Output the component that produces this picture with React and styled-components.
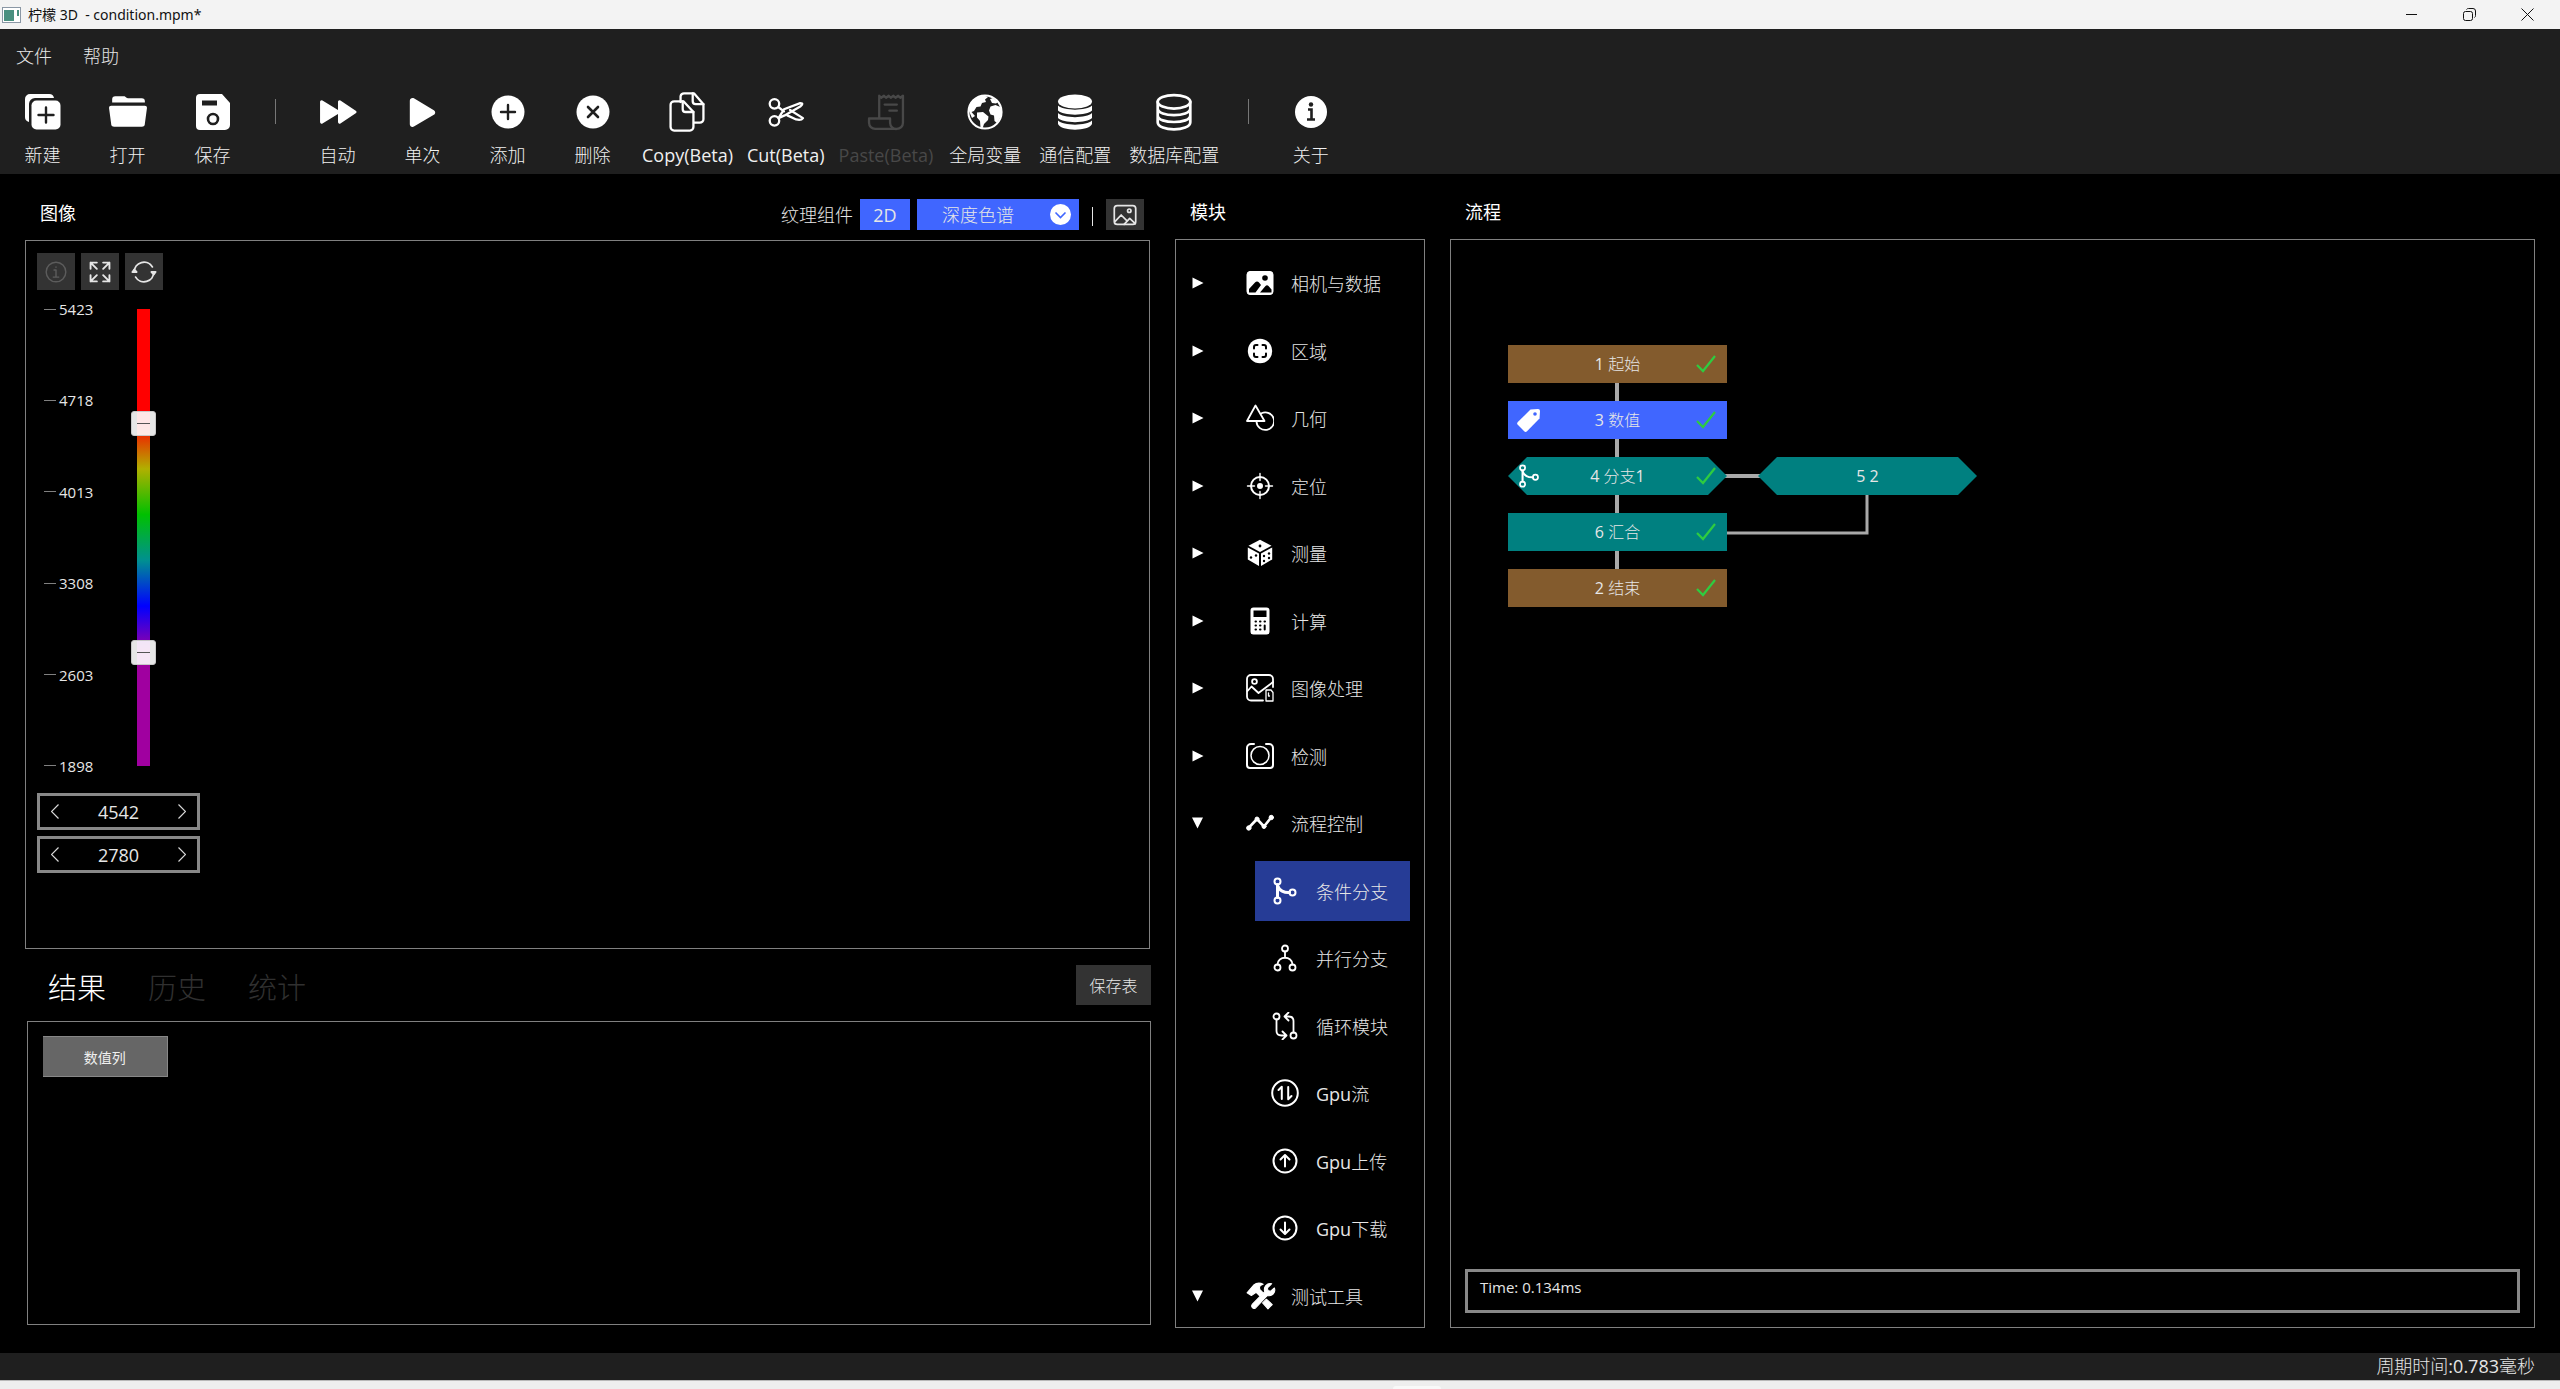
import React, { useState } from "react";
import styled, { createGlobalStyle } from "styled-components";
import { FaPlay } from "react-icons/fa";

// css
const GlobalStyle = createGlobalStyle`
  * {
    box-sizing: border-box;
  }
  body {
    margin: 0;
    background: #000000;
    color: #e6e6e6;
    font-family: "Open Sans", "Noto Sans CJK SC Light", "Noto Sans CJK SC", sans-serif;
    font-size: 18px;
    line-height: 24px;
  }
  button, input, select {
    font-family: inherit;
    font-weight: inherit;
    color: inherit;
    margin: 0;
    padding: 0;
    border: none;
    border-radius: 0;
    background: none;
  }
  svg {
    display: block;
    flex: none;
  }
`;
const Window = styled.div`
  display: flex;
  flex-direction: column;
  min-height: 100vh;
`;
const TitleBar = styled.header`
  display: flex;
  align-items: center;
  height: 29px;
  padding: 0 4px 0 2px;
  background: #f3f3f3;
  color: #111111;
  font-family: "Noto Sans", "Noto Sans CJK SC", sans-serif;
  font-size: 14px;
`;
const TitleText = styled.span`
  flex: 1;
  margin-left: 7px;
  white-space: pre;
`;
const WindowButton = styled.button`
  display: flex;
  align-items: center;
  justify-content: center;
  width: 58px;
  height: 29px;
`;
const Header = styled.div`
  display: flex;
  flex-direction: column;
  height: 145px;
  background: #1f1f1f;
`;
const Menu = styled.nav`
  display: flex;
  gap: 31px;
  padding: 15px 16px 0;
`;
const MenuItem = styled.button`
  font-size: 18px;
  line-height: 24px;
`;
const Toolbar = styled.div`
  display: flex;
  padding-top: 20px;
`;
const Tool = styled.button`
  display: flex;
  flex-direction: column;
  align-items: center;
  gap: 7px;
  min-width: 85px;
  padding: 0 ${(props) => (props.$beta ? "7px" : "9px")};
  font-size: 18px;
  line-height: 24px;
  color: ${(props) => (props.disabled ? "#484848" : "#f0f0f0")};
`;
const ToolIcon = styled.span`
  display: flex;
  align-items: center;
  justify-content: center;
  height: 48px;
  color: ${(props) => (props.$off ? "#484848" : "#ffffff")};
`;
const Divider = styled.div`
  width: 1px;
  height: 25px;
  margin: 11px 19px 0 20px;
  background: #777777;
`;
const Main = styled.main`
  display: grid;
  grid-template-columns: 1126fr 251px 1085fr;
  gap: 24px;
  flex: 1;
  padding: 0 25px 25px;
`;
const Column = styled.div`
  display: flex;
  flex-direction: column;
`;
const ModuleColumn = styled(Column)`
  padding-right: 1px;
`;
const ColumnHead = styled.div`
  display: flex;
  align-items: center;
  height: 65px;
  padding: 10px 0 0 15px;
`;
const ImageHead = styled(ColumnHead)`
  height: 66px;
  padding: 15px 6px 0 15px;
`;
const ColumnTitle = styled.h2`
  flex: 1;
  margin: 0;
  font-family: "Open Sans", "Noto Sans CJK SC", sans-serif;
  font-size: 18px;
  font-weight: 400;
  line-height: 24px;
  color: #ffffff;

  ${ImageHead} & {
    padding-bottom: 4px;
  }
`;
const Panel = styled.section`
  display: flex;
  flex-direction: column;
  flex: 1;
  border: 1px solid #808080;
`;
const ImagePart = styled.div`
  display: flex;
  flex-direction: column;
  flex: 775;
  padding-right: 1px;
`;
const ResultPart = styled.div`
  display: flex;
  flex-direction: column;
  flex: 376;
  padding-left: 2px;
  margin-bottom: 3px;
`;
const BlueButton = styled.button`
  width: 50px;
  height: 31px;
  margin: 0 7px;
  background: #4066ff;
  font-size: 18px;
`;
const SelectBox = styled.label`
  display: grid;
  align-items: center;
  width: 162px;
  height: 31px;
  background: #4066ff;

  select, svg {
    grid-area: 1 / 1;
  }
  select {
    height: 31px;
    padding-left: 25px;
    appearance: none;
    outline: none;
    font-size: 18px;
  }
  svg {
    justify-self: end;
    margin-right: 8px;
    pointer-events: none;
  }
`;
const Bar = styled.span`
  width: 1px;
  height: 19px;
  margin: 4px 13px 0;
  background: #e6e6e6;
`;
const DarkButton = styled.button`
  display: flex;
  align-items: center;
  justify-content: center;
  width: ${(props) => props.width || "38px"};
  height: ${(props) => props.height || "37px"};
  background: #333333;
  color: ${(props) => (props.disabled ? "#5c5c5c" : "#e6e6e6")};
  font-size: 16px;
`;
const ViewTools = styled.div`
  display: flex;
  gap: 6px;
  padding: 12px 11px 0;
`;
const RangeArea = styled.div`
  display: flex;
  gap: 40px;
  padding: 9px 0 0 18px;
`;
const Scale = styled.div`
  display: flex;
  flex-direction: column;
  justify-content: space-between;
  height: 477px;
  width: 53px;
`;
const Tick = styled.span`
  display: flex;
  align-items: center;
  gap: 3px;
  font-size: 15px;
  line-height: 20px;

  &::before {
    content: "";
    width: 12px;
    height: 1px;
    background: #808080;
  }
`;
const Track = styled.div`
  position: relative;
  width: 13px;
  height: 457px;
  margin-top: 10px;
  background: linear-gradient(
    #ff0000 25%, #b0b000 35%, #00c000 45%, #009090 55%, #0000ff 65%, #a000a0 75%
  );
`;
// the range runs half a thumb past the track on both ends
const TrackRange = styled.input`
  position: absolute;
  top: -12px;
  left: -6px;
  width: 25px;
  height: 482px;
  appearance: none;
  writing-mode: vertical-lr;
  direction: rtl;
  pointer-events: none;

  &::-webkit-slider-thumb {
    appearance: none;
    width: 25px;
    height: 25px;
    border: 1px solid #c8c8c8;
    border-radius: 3px;
    background:
      linear-gradient(#555555, #555555) center / 13px 1px no-repeat,
      rgba(255, 255, 255, 0.9);
    pointer-events: auto;
  }
`;
const Spinners = styled.div`
  display: flex;
  flex-direction: column;
  gap: 6px;
  width: 163px;
  margin: 17px 11px;
`;
const Spinner = styled.div`
  display: flex;
  align-items: center;
  height: 37px;
  border: 3px solid #888888;

  button {
    display: flex;
    justify-content: center;
    width: 30px;
  }
  input {
    flex: 1;
    min-width: 0;
    text-align: center;
    font-size: 18px;
    outline: none;
  }
`;
const Tabs = styled.div`
  display: flex;
  align-items: center;
  gap: 42px;
  height: 72px;
  padding-left: 21px;
`;
const Tab = styled.button`
  padding-top: 6px;
  font-size: 29px;
  line-height: 40px;
  color: ${(props) => (props.$active ? "#ffffff" : "#303030")};
`;
const TabSpace = styled.span`
  flex: 1;
`;
const ResultTable = styled.table`
  align-self: flex-start;
  margin: 14px 15px;
  border-collapse: collapse;

  th {
    width: 124px;
    height: 40px;
    padding: 0;
    background: #666666;
    border: 1px solid #888888;
    border-left: none;
    color: #f0f0f0;
    font-family: "Noto Sans CJK SC", sans-serif;
    font-size: 14px;
    font-weight: 400;
  }
`;
const Tree = styled.ul`
  display: flex;
  flex-direction: column;
  justify-content: space-between;
  flex: 1;
  margin: 0;
  padding: 13px 0 1px;
  list-style: none;
`;
const TreeRow = styled.li`
  display: flex;
  height: 60px;
  padding-left: ${(props) => (props.$child ? "79px" : "16px")};
`;
const TreeButton = styled.button`
  display: flex;
  align-items: center;
  width: ${(props) => (props.$child ? "155px" : "220px")};
  padding-left: ${(props) => (props.$child ? "16px" : "0")};
  background: ${(props) => (props.$selected ? "#263c96" : "none")};
  font-size: 18px;
  white-space: nowrap;
`;
const Arrow = styled.span`
  width: 54px;
`;
const TreeIcon = styled.span`
  display: flex;
  width: 45px;
  color: #ffffff;
`;
const Canvas = styled.div`
  position: relative;
  flex: 1;
  min-height: 400px;
`;
const Node = styled.div`
  position: absolute;
  left: ${(props) => props.$x}px;
  top: ${(props) => props.$y}px;
  display: grid;
  grid-template-columns: 42px 1fr 42px;
  align-items: center;
  width: 219px;
  height: 38px;
  background: ${(props) => props.$bg};
  clip-path: ${(props) =>
    props.$hex ? "polygon(19px 0, 200px 0, 100% 50%, 200px 100%, 19px 100%, 0 50%)" : "none"};
  font-size: 16px;
  text-align: center;
  white-space: nowrap;

  svg {
    justify-self: center;
  }
`;
const NodeIcon = styled.span`
  display: flex;
  justify-content: center;
  color: #ffffff;
`;
const Wires = styled.svg`
  position: absolute;
  left: 0;
  top: 0;
`;
const TimeBox = styled.div`
  height: 44px;
  margin: 0 14px 14px;
  padding: 3px 12px;
  border: 3px solid #888888;
  font-size: 15px;
`;
const StatusBar = styled.footer`
  height: 27px;
  padding-right: 25px;
  background: #1f1f1f;
  line-height: 27px;
  text-align: right;
`;
const Taskbar = styled.div`
  display: flex;
  align-items: flex-end;
  justify-content: center;
  height: 9px;
  border-top: 1px solid #b8b8b8;
  background: #eeeeee;

  &::after {
    content: "";
    width: 48px;
    height: 3px;
    margin-left: 274px;
    border-radius: 3px 3px 0 0;
    background: #f9f9f9;
  }
`;

// icons
const Icon = ({ size = 28, width = 2, children }) => (
  <svg width={size} height={size} viewBox="0 0 28 28" fill="none" stroke="currentColor"
    strokeWidth={width} strokeLinecap="round" strokeLinejoin="round" aria-hidden="true">
    {children}
  </svg>
);
const Solid = ({ size = 36, children }) => (
  <svg width={size} height={size} viewBox="0 0 36 36" fill="currentColor" aria-hidden="true">
    {children}
  </svg>
);
const NewIcon = () => (
  <Solid>
    <path d="M5 0h19a5 5 0 0 1 5 4H10a6 6 0 0 0-6 6v18a5 5 0 0 1-4-5V5a5 5 0 0 1 5-5z" />
    <rect x="6.500" y="6.500" width="29" height="29" rx="5" />
    <path d="M21 13.500v15M13.500 21h15" stroke="#1f1f1f" strokeWidth="2.400" strokeLinecap="round" />
  </Solid>
);
const OpenIcon = () => (
  <Solid size={38}>
    <path d="M3 9V6a3 3 0 0 1 3-3h8c2 0 2 2 5 2h12a3 3 0 0 1 3 3v1z" />
    <path d="M2 12h32a2 2 0 0 1 2 2l-2 15a3 3 0 0 1-3 3H5a3 3 0 0 1-3-3L0 14a2 2 0 0 1 2-2z" />
  </Solid>
);
const SaveIcon = () => (
  <Solid>
    <path d="M4 0h23l8 9v22a5 5 0 0 1-5 5H5a4 4 0 0 1-4-4V4a4 4 0 0 1 4-4z" />
    <path d="M7 6.500h15v5H7z" fill="#1f1f1f" />
    <circle cx="18" cy="25" r="5" fill="none" stroke="#1f1f1f" strokeWidth="2.600" />
  </Solid>
);
const ForwardIcon = () => (
  <Solid size={38}>
    <path d="M1 8.500a1.500 1.500 0 0 1 2.300-1.300L18 16V8.500a1.500 1.500 0 0 1 2.300-1.300l14.500 9.500a1.500 1.500 0 0 1 0 2.600l-14.500 9.500A1.500 1.500 0 0 1 18 27.500V20L3.300 28.800A1.500 1.500 0 0 1 1 27.500z" />
  </Solid>
);
const AddIcon = () => (
  <Solid>
    <circle cx="18" cy="18" r="16.500" />
    <path d="M18 11v14M11 18h14" stroke="#1f1f1f" strokeWidth="2.400" strokeLinecap="round" />
  </Solid>
);
const DeleteIcon = () => (
  <Solid>
    <circle cx="18" cy="18" r="16.500" />
    <path d="M13 13l10 10M23 13L13 23" stroke="#1f1f1f" strokeWidth="2.600" strokeLinecap="round" />
  </Solid>
);
const CopyIcon = () => (
  <Icon size={40} width={1.6}>
    <path d="M9.500 7V3A2.500 2.500 0 0 1 12 1h7l6.500 7.500V19a2.500 2.500 0 0 1-2.500 2.500h-4" />
    <path d="M18 1v5.500A2 2 0 0 0 20 8.500h5.500" />
    <path d="M5 6.500h6.500l7 7.500v10.500A2.500 2.500 0 0 1 16 27H5a2.500 2.500 0 0 1-2.500-2.500V9A2.500 2.500 0 0 1 5 6.500z" />
    <path d="M11 6.500V12a2 2 0 0 0 2 2h5.500" />
  </Icon>
);
const CutIcon = () => (
  <Icon size={38} width={1.7}>
    <circle cx="5.500" cy="8" r="3.500" />
    <circle cx="5.500" cy="20.500" r="3.500" />
    <path d="M8.500 10.500l4 3M8.500 18.500l4-6.500 12-4.500c2 0 2 1 0 2.500L13 16.500z" />
    <path d="M17 12.500l9.500 6c-1 1.500-3 1.500-5 1L15 16.500" />
  </Icon>
);
const PasteIcon = () => (
  <Icon size={38} width={1.7}>
    <path d="M9 18V2l1.500 1.500L12.500 2 14 3.500 16 2l1.500 1.500 2-1.500L21 3.500 23 2l1.500 1.500 2-1.500v20a4.500 4.500 0 0 1-4.500 4.500H6A4.500 4.500 0 0 1 1.500 22v-3.200H17V22a4.500 4.500 0 0 0 5 4.500" />
    <path d="M13 8.500h9M16.500 13h5.500" />
  </Icon>
);
const EarthIcon = () => (
  <Solid>
    <circle cx="18" cy="18" r="16.600" fill="none" stroke="currentColor" strokeWidth="2" />
    <path d="M1.500 16C3 8 9 2 17 1.500l4 1.500-3 2.500 1 2.500-4 1-1.500 3.500-4 .5L7 17l-2.500 1L8 22l-3 2z" />
    <path d="M10 18.500l6-.5 5.500 4.500L21 26l-4 4-1.500 4.500-2-1-.5-6.500-3-3.500z" />
    <path d="M23.500 12.500l5-1.500 6 2.500.5 7-5 8.500-2.500-2-.5-5.500-3.500-1-1.500-4z" />
    <path d="M23 5l3-1 5 4-2 1.500-4-.5z" />
  </Solid>
);
const DiscsIcon = () => (
  <Solid>
    <ellipse cx="18" cy="7.500" rx="17" ry="7" />
    <path d="M1 11.500c5 5.500 29 5.500 34 0v5c-5 5.500-29 5.500-34 0z" />
    <path d="M1 19c5 5.500 29 5.500 34 0v5c-5 5.500-29 5.500-34 0z" />
    <path d="M1 26.500c5 5.500 29 5.500 34 0V30c-3 7.500-31 7.500-34 0z" />
  </Solid>
);
const DatabaseIcon = () => (
  <Icon size={38} width={2}>
    <ellipse cx="14" cy="6.500" rx="12" ry="5" />
    <path d="M2 6.500v15c0 7 24 7 24 0v-15M2 11.500c0 6.500 24 6.500 24 0M2 16.500c0 6.500 24 6.500 24 0" />
  </Icon>
);
const AboutIcon = () => (
  <Solid>
    <circle cx="18" cy="18" r="16" />
    <circle cx="18" cy="10.500" r="2.200" fill="#1f1f1f" />
    <path d="M15 15.500h3.500V25M14 25.500h8" fill="none" stroke="#1f1f1f" strokeWidth="2.600" />
  </Solid>
);
const PictureIcon = () => (
  <Icon size={24} width={2}>
    <rect x="1.500" y="3" width="25" height="22" rx="3.500" />
    <circle cx="19" cy="9" r="2" />
    <path d="M2.500 21.500L9.500 14l6 6M13 25l6.500-7 6.500 6" />
  </Icon>
);
const InfoIcon = () => (
  <Icon size={22} width={1.8}>
    <circle cx="14" cy="14" r="12.500" />
    <path d="M11.500 11.500H14V20M10.500 20.500h7M14 7.500v.5" />
  </Icon>
);
const ExpandIcon = () => (
  <Icon size={22} width={2.4}>
    <path d="M10 2H2v8M2 2l8 8M18 2h8v8M26 2l-8 8M10 26H2v-8M2 26l8-8M18 26h8v-8M26 26l-8-8" />
  </Icon>
);
const RefreshIcon = () => (
  <Icon size={26} width={2}>
    <path d="M3.500 14A10.500 10.500 0 0 1 23 8.500M24.500 14A10.500 10.500 0 0 1 5 19.500" />
    <path d="M1.500 14l2-2.500L6 14zM22 14l2.500 2.500 2-2.500z" fill="currentColor" />
  </Icon>
);
const Chevron = ({ right }) => (
  <svg width="8" height="15" viewBox="0 0 8 15" fill="none" stroke="#d8d8d8" strokeWidth="1.200">
    <path d={right ? "M.5 .5l7 7-7 7" : "M7.500 .5l-7 7 7 7"} />
  </svg>
);
const PhotoIcon = () => (
  <Icon width={1}>
    <rect x="1" y="2.500" width="26" height="23" rx="3" fill="currentColor" />
    <circle cx="19" cy="9" r="2.800" fill="#000000" stroke="none" />
    <path d="M3 23.500v-3.500l6-6.500c1.500-1.500 3-1 4 0l2 2.500L9.500 23.500zM14 23.500l5.500-6.500c1-1 2-1 3 0l3 3.500v3z" fill="#000000" stroke="none" />
  </Icon>
);
const RegionIcon = () => (
  <Icon>
    <circle cx="14" cy="14" r="12.200" fill="currentColor" stroke="none" />
    <path d="M8 11.500V10a2 2 0 0 1 2-2h1.500M16.500 8H18a2 2 0 0 1 2 2v1.500M20 16.500V18a2 2 0 0 1-2 2h-1.500M11.500 20H10a2 2 0 0 1-2-2v-1.500" stroke="#000000" />
  </Icon>
);
const ShapesIcon = () => (
  <Icon width={1.8}>
    <path d="M9.500 1.500L1 17h17.500z" />
    <path d="M15.500 9.200a8.800 8.800 0 1 1-5 8.500" />
  </Icon>
);
const LocateIcon = () => (
  <Icon>
    <circle cx="14" cy="14" r="9" />
    <circle cx="14" cy="14" r="2" fill="currentColor" />
    <path d="M14 1.500v7M14 19.500v7M1.500 14h7M19.500 14h7" strokeWidth="1.400" />
  </Icon>
);
const DiceIcon = () => (
  <Icon width={0}>
    <path d="M14 .8l11.500 6L14 13 2.500 6.800z" fill="currentColor" />
    <path d="M1.800 8.500L13 14.500V27L1.800 20.500zM26.200 8.500L15 14.500V27l11.200-6.500z" fill="currentColor" />
    <g fill="#000000">
      <circle cx="14" cy="7" r="1.400" /><circle cx="5" cy="18.500" r="1.200" />
      <circle cx="10" cy="16.500" r="1.200" /><circle cx="18" cy="17" r="1.200" />
      <circle cx="23" cy="14.500" r="1.200" /><circle cx="18" cy="22" r="1.200" />
      <circle cx="23" cy="19" r="1.200" />
    </g>
  </Icon>
);
const CalculatorIcon = () => (
  <Icon>
    <rect x="6" y="2" width="16" height="24" rx="1.500" strokeWidth="3" />
    <path d="M6 11h16v15H6z" fill="currentColor" />
    <path d="M9.500 14.500h.5M14 14.500h.5M18.500 14.500h.5M9.500 18.500h.5M14 18.500h.5M9.500 22.500h.5M14 22.500h.5M18.700 18.500v4" stroke="#000000" />
  </Icon>
);
const ProcessIcon = () => (
  <Icon width={1.8}>
    <path d="M17 26.500H5A4 4 0 0 1 1 22.500V5a4 4 0 0 1 4-4h18a4 4 0 0 1 4 4v8" />
    <circle cx="8.500" cy="7.500" r="2.400" />
    <path d="M1.500 17l4-4.500 7 6.500L27 8" />
    <path d="M20 16h5l2 2.500V27h-7zM22.500 19v3h1" strokeWidth="1.300" />
  </Icon>
);
const DetectIcon = () => (
  <Icon>
    <path d="M8 2H5a4 4 0 0 0-4 4v17a3 3 0 0 0 3 3h20a3 3 0 0 0 3-3V6a4 4 0 0 0-4-4h-3" />
    <circle cx="14" cy="13.500" r="9" strokeWidth="1.500" />
  </Icon>
);
const TrendIcon = () => (
  <Icon width={2.6}>
    <path d="M2.500 19L11 10l7 7.500L25.500 8" />
    <g fill="currentColor" strokeWidth="1">
      <circle cx="2.800" cy="19" r="2.200" /><circle cx="11" cy="10" r="2" />
      <circle cx="18" cy="17.500" r="2" /><circle cx="25.300" cy="8.500" r="2.200" />
    </g>
  </Icon>
);
const BranchIcon = ({ size, width = 3 }) => (
  <Icon size={size}>
    <circle cx="6.500" cy="4.500" r="3" /><circle cx="6.500" cy="23.500" r="3" />
    <circle cx="21.500" cy="15.500" r="3" />
    <path d="M6.500 7.500v13" strokeWidth={width} />
    <path d="M6.500 8.500c1.500 5 7 7.500 12 7" strokeWidth={width} />
  </Icon>
);
const ParallelIcon = () => (
  <Icon width={1.8}>
    <circle cx="14" cy="4.500" r="3" /><circle cx="6.500" cy="23.500" r="3" />
    <circle cx="21.500" cy="23.500" r="3" />
    <path d="M14 7.500v6M6.500 20.500c0-9 15-9 15 0" />
  </Icon>
);
const LoopIcon = () => (
  <Icon width={1.8}>
    <circle cx="5.500" cy="4.500" r="3" /><circle cx="22.500" cy="23.500" r="3" />
    <path d="M5.500 7.500V19c0 3.500 2 4.500 5 4.500h4M11.500 19.500l4 4-4 4M22.500 20.500V9c0-3.500-2-4.500-5-4.500h-4M17.500 .5l-4 4 4 4" />
  </Icon>
);
const StreamIcon = () => (
  <Icon>
    <circle cx="14" cy="14" r="12.800" />
    <path d="M10.800 20V8M7.500 11l3.300-3.300M17.200 8v12M20.500 17l-3.300 3.300" />
  </Icon>
);
const UploadIcon = () => (
  <Icon>
    <circle cx="14" cy="14" r="11.500" />
    <path d="M14 19.500v-11M9.500 12.500L14 8l4.500 4.500" />
  </Icon>
);
const DownloadIcon = () => (
  <Icon>
    <circle cx="14" cy="14" r="11.500" />
    <path d="M14 8.500v11M9.500 15.500L14 20l4.500-4.500" />
  </Icon>
);
const ToolsIcon = () => (
  <Icon size={30} width={1}>
    <g fill="currentColor">
      <path d="M1 11l6-7c3-2.500 6-2.500 9-1-3 1-4 2.500-3 5l3 3-3 3-3.500-3.500L5 13.500z" />
      <path d="M26.500 6.500c1.500 4.500-2 8-6.500 7L9 25c-2 2-5-1-3-3.500L17.500 10c-1.500-4.500 2-8.500 6.500-7.500l-4 4 .5 2.500 2.500.5z" />
      <path d="M19 17l5.500 5-4 4-5-5.500z" />
    </g>
  </Icon>
);
const TagIcon = () => (
  <svg width="24" height="24" viewBox="0 0 24 24" fill="#ffffff" aria-hidden="true">
    <path d="M13.500 1.500l7.500-.5a2 2 0 0 1 2 2l-.5 7.500L10 23.300a2 2 0 0 1-2.800 0L.8 16.800a2 2 0 0 1 0-2.800z" />
    <circle cx="18" cy="6" r="1.800" fill="#4066ff" />
  </svg>
);
const CheckIcon = () => (
  <svg width="20" height="18" viewBox="0 0 20 18" fill="none" stroke="#2ecc40" strokeWidth="2.200">
    <path d="M1 10l6 6L19 1" />
  </svg>
);

const TOOLS = [
  { label: "新建", icon: <NewIcon /> },
  { label: "打开", icon: <OpenIcon /> },
  { label: "保存", icon: <SaveIcon /> },
  null,
  { label: "自动", icon: <ForwardIcon /> },
  { label: "单次", icon: <FaPlay size={29} /> },
  { label: "添加", icon: <AddIcon /> },
  { label: "删除", icon: <DeleteIcon /> },
  { label: "Copy(Beta)", icon: <CopyIcon />, beta: true },
  { label: "Cut(Beta)", icon: <CutIcon />, beta: true },
  { label: "Paste(Beta)", icon: <PasteIcon />, beta: true, disabled: true },
  { label: "全局变量", icon: <EarthIcon /> },
  { label: "通信配置", icon: <DiscsIcon /> },
  { label: "数据库配置", icon: <DatabaseIcon /> },
  null,
  { label: "关于", icon: <AboutIcon /> },
];

const MODULES = [
  { label: "相机与数据", icon: <PhotoIcon /> },
  { label: "区域", icon: <RegionIcon /> },
  { label: "几何", icon: <ShapesIcon /> },
  { label: "定位", icon: <LocateIcon /> },
  { label: "测量", icon: <DiceIcon /> },
  { label: "计算", icon: <CalculatorIcon /> },
  { label: "图像处理", icon: <ProcessIcon /> },
  { label: "检测", icon: <DetectIcon /> },
  { label: "流程控制", icon: <TrendIcon />, open: true },
  { label: "条件分支", icon: <BranchIcon />, child: true },
  { label: "并行分支", icon: <ParallelIcon />, child: true },
  { label: "循环模块", icon: <LoopIcon />, child: true },
  { label: "Gpu流", icon: <StreamIcon />, child: true },
  { label: "Gpu上传", icon: <UploadIcon />, child: true },
  { label: "Gpu下载", icon: <DownloadIcon />, child: true },
  { label: "测试工具", icon: <ToolsIcon />, open: true },
];

const NODES = [
  { label: "1 起始", x: 57, y: 105, bg: "#835b2d", done: true },
  { label: "3 数值", x: 57, y: 161, bg: "#4066ff", done: true, icon: <TagIcon /> },
  { label: "4 分支1", x: 57, y: 217, bg: "#008080", done: true, hex: true, icon: <BranchIcon size={24} width={2.4} /> },
  { label: "5 2", x: 307, y: 217, bg: "#008080", hex: true },
  { label: "6 汇合", x: 57, y: 273, bg: "#008080", done: true },
  { label: "2 结束", x: 57, y: 329, bg: "#835b2d", done: true },
];

const MIN = 1898;
const MAX = 5423;

const NumberSpinner = ({ label, value, onChange }) => (
  <Spinner>
    <button aria-label={label + " -"} onClick={() => onChange(value - 1)}><Chevron /></button>
    <input aria-label={label} value={value} onChange={(e) => onChange(Number(e.target.value) || MIN)} />
    <button aria-label={label + " +"} onClick={() => onChange(value + 1)}><Chevron right /></button>
  </Spinner>
);

const ImageView = () => {
  const [high, setHigh] = useState(4542);
  const [low, setLow] = useState(2780);

  return (
    <ImagePart>
      <ImageHead>
        <ColumnTitle>图像</ColumnTitle>
        <span>纹理组件</span>
        <BlueButton>2D</BlueButton>
        <SelectBox>
          <select aria-label="色谱">
            <option>深度色谱</option>
          </select>
          <svg width="21" height="21" viewBox="0 0 21 21">
            <circle cx="10.500" cy="10.500" r="10.500" fill="#ffffff" />
            <path d="M5.500 8.500l5 5 5-5" fill="none" stroke="#4066ff" strokeWidth="1.600" />
          </svg>
        </SelectBox>
        <Bar />
        <DarkButton height="31px" aria-label="图片"><PictureIcon /></DarkButton>
      </ImageHead>
      <Panel>
        <ViewTools>
          <DarkButton disabled aria-label="信息"><InfoIcon /></DarkButton>
          <DarkButton aria-label="全屏"><ExpandIcon /></DarkButton>
          <DarkButton aria-label="刷新"><RefreshIcon /></DarkButton>
        </ViewTools>
        <RangeArea>
          <Scale>
            {[5423, 4718, 4013, 3308, 2603, 1898].map((n) => <Tick key={n}>{n}</Tick>)}
          </Scale>
          <Track>
            <TrackRange type="range" aria-label="上限" min={MIN} max={MAX} value={high}
              onChange={(e) => setHigh(Number(e.target.value))} />
            <TrackRange type="range" aria-label="下限" min={MIN} max={MAX} value={low}
              onChange={(e) => setLow(Number(e.target.value))} />
          </Track>
        </RangeArea>
        <Spinners>
          <NumberSpinner label="上限值" value={high} onChange={setHigh} />
          <NumberSpinner label="下限值" value={low} onChange={setLow} />
        </Spinners>
      </Panel>
    </ImagePart>
  );
};

const ResultView = () => {
  const [tab, setTab] = useState("结果");

  return (
    <ResultPart>
      <Tabs>
        {["结果", "历史", "统计"].map((name) => (
          <Tab key={name} $active={tab === name} onClick={() => setTab(name)}>{name}</Tab>
        ))}
        <TabSpace />
        <DarkButton width="75px" height="40px">保存表</DarkButton>
      </Tabs>
      <Panel>
        <ResultTable>
          <thead>
            <tr><th scope="col">数值列</th></tr>
          </thead>
        </ResultTable>
      </Panel>
    </ResultPart>
  );
};

const ModuleTree = () => {
  const [selected, setSelected] = useState("条件分支");

  return (
    <ModuleColumn>
      <ColumnHead><ColumnTitle>模块</ColumnTitle></ColumnHead>
      <Panel>
        <Tree>
          {MODULES.map((m) => (
            <TreeRow key={m.label} $child={m.child}>
              <TreeButton $child={m.child} $selected={selected === m.label}
                onClick={() => m.child && setSelected(m.label)}>
                {!m.child && (
                  <Arrow>
                    <svg width="12" height="12" viewBox="0 0 12 12" fill="#ffffff">
                      <path d={m.open ? "M0 .5h11L5.500 11.500z" : "M.5 .5v11l11-5.500z"} />
                    </svg>
                  </Arrow>
                )}
                <TreeIcon>{m.icon}</TreeIcon>
                {m.label}
              </TreeButton>
            </TreeRow>
          ))}
        </Tree>
      </Panel>
    </ModuleColumn>
  );
};

const FlowView = () => (
  <Column>
    <ColumnHead><ColumnTitle>流程</ColumnTitle></ColumnHead>
    <Panel>
      <Canvas>
        <Wires width="560" height="380" fill="none" stroke="#a9a9a9" strokeWidth="4">
          <path d="M166 120v220M270 236h50" />
          <path d="M416 236v57H270" strokeWidth="3" />
        </Wires>
        {NODES.map((n) => (
          <Node key={n.label} $x={n.x} $y={n.y} $bg={n.bg} $hex={n.hex}>
            <NodeIcon>{n.icon}</NodeIcon>
            <span>{n.label}</span>
            {n.done && <CheckIcon />}
          </Node>
        ))}
      </Canvas>
      <TimeBox>Time: 0.134ms</TimeBox>
    </Panel>
  </Column>
);

export default function App() {
  return (
    <Window>
      <GlobalStyle />
      <TitleBar>
        <svg width="19" height="16" viewBox="0 0 19 16">
          <rect x=".5" y=".5" width="18" height="15" fill="#ffffff" stroke="#8a97a5" />
          <rect x="2" y="3" width="10" height="11" fill="#4a9080" />
          <path d="M16 3v6" stroke="#4a9080" strokeWidth="2" />
        </svg>
        <TitleText>柠檬 3D  - condition.mpm*</TitleText>
        <WindowButton aria-label="最小化">
          <svg width="13" height="13" stroke="#111111"><path d="M1 6.500h11" /></svg>
        </WindowButton>
        <WindowButton aria-label="还原">
          <svg width="13" height="13" stroke="#111111" fill="none">
            <rect x=".5" y="3.500" width="9" height="9" rx="2" />
            <path d="M3.500 1.500c1-1 1-1 2-1H10a2.500 2.500 0 0 1 2.500 2.500v4.500c0 1 0 1-1 2" />
          </svg>
        </WindowButton>
        <WindowButton aria-label="关闭">
          <svg width="13" height="13" stroke="#111111"><path d="M.5 .5l12 12M12.500 .5l-12 12" /></svg>
        </WindowButton>
      </TitleBar>
      <Header>
        <Menu>
          <MenuItem>文件</MenuItem>
          <MenuItem>帮助</MenuItem>
        </Menu>
        <Toolbar>
          {TOOLS.map((t, i) =>
            t ? (
              <Tool key={t.label} $beta={t.beta} disabled={t.disabled}>
                <ToolIcon $off={t.disabled}>{t.icon}</ToolIcon>
                {t.label}
              </Tool>
            ) : (
              <Divider key={i} />
            )
          )}
        </Toolbar>
      </Header>
      <Main>
        <Column>
          <ImageView />
          <ResultView />
        </Column>
        <ModuleTree />
        <FlowView />
      </Main>
      <StatusBar>周期时间:0.783毫秒</StatusBar>
      <Taskbar />
    </Window>
  );
}
